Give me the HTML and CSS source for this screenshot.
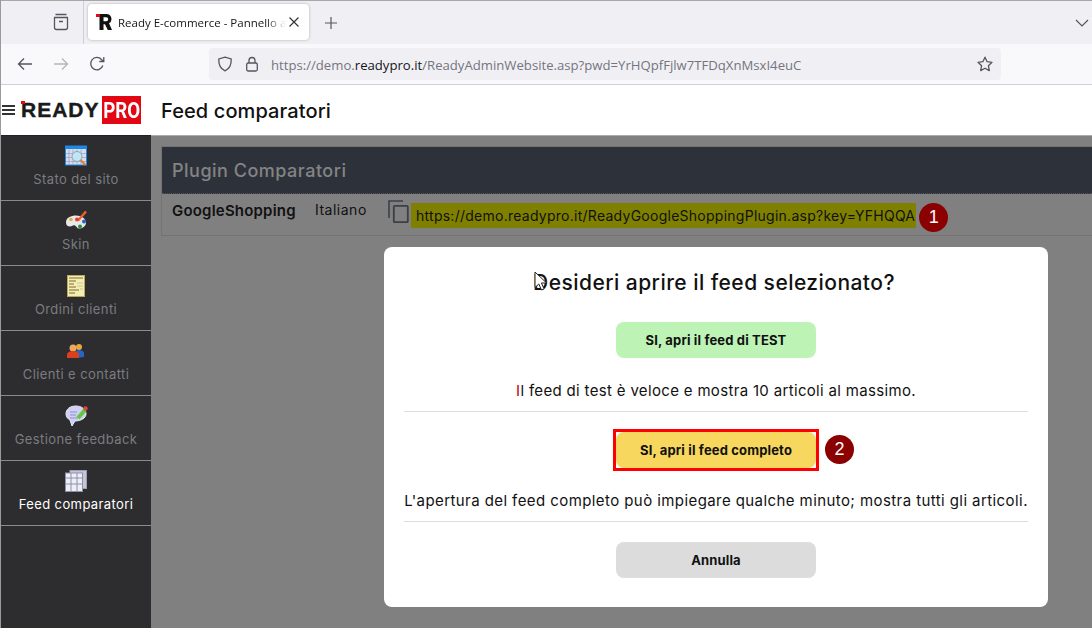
FILE: index.html
```html
<!DOCTYPE html>
<html lang="it">
<head>
<meta charset="utf-8">
<title>Feed comparatori</title>
<link rel="stylesheet" href="styles.css">
</head>
<body>
<div class="tabbar">
  <div class="tab-side">
    <svg class="ico" width="18" height="18" viewBox="0 0 18 18"><path d="M3.500 1.500h11M2 4.500h14M2.500 4.500v10a2 2 0 0 0 2 2h9a2 2 0 0 0 2-2v-10M7 8.500h4" fill="none" stroke="#55555f" stroke-width="1.300"/></svg>
  </div>
  <div class="tab">
    <svg class="favicon" width="16" height="16" viewBox="0 0 16 16"><rect x="0" y="0" width="4" height="3" fill="#e30613"/><path d="M4 0h6.500a5 5 0 0 1 2.500 9.300L16 16h-4.200L9 10.300H7.500V16H3.500V3H4z M7.500 3.200v4h2.700a2 2 0 0 0 0-4z" fill="#111" fill-rule="evenodd"/></svg>
    <span class="tab-title">Ready E-commerce - Pannello a</span>
    <svg class="tab-close" width="12" height="12" viewBox="0 0 12 12"><path d="M1.500 1.500l9 9M10.500 1.500l-9 9" stroke="#333" stroke-width="1.200"/></svg>
  </div>
  <svg class="plus" width="14" height="14" viewBox="0 0 14 14"><path d="M7 1v12M1 7h12" stroke="#55555f" stroke-width="1.200"/></svg>
  <svg class="chev" width="14" height="8" viewBox="0 0 14 8"><path d="M1 1l6 6 6-6" fill="none" stroke="#55555f" stroke-width="1.200"/></svg>
</div>

<div class="toolbar">
  <svg class="nav" width="16" height="14" viewBox="0 0 16 14"><path d="M15 7H1.500M7 1.500L1.500 7 7 12.500" fill="none" stroke="#55555f" stroke-width="1.300"/></svg>
  <svg class="nav" width="16" height="14" viewBox="0 0 16 14"><path d="M1 7h13.500M9 1.500L14.500 7 9 12.500" fill="none" stroke="#b4b4ba" stroke-width="1.300"/></svg>
  <svg class="nav" width="16" height="16" viewBox="0 0 16 16"><path d="M13.800 9.500A6.200 6.200 0 1 1 12.500 3.500L14.500 5.200M14.800 1v4.500h-4.500" fill="none" stroke="#55555f" stroke-width="1.300"/></svg>
  <div class="urlbar">
    <svg width="16" height="16" viewBox="0 0 16 16"><path d="M8 1.200L14.200 3c.3 5.500-1.500 9.700-6.200 11.800C3.300 12.700 1.500 8.500 1.800 3z" fill="none" stroke="#55555f" stroke-width="1.300"/></svg>
    <svg width="14" height="16" viewBox="0 0 14 16"><rect x="1.700" y="7" width="10.600" height="8" rx="1.500" fill="none" stroke="#55555f" stroke-width="1.300"/><path d="M4 7V4.500a3 3 0 0 1 6 0V7" fill="none" stroke="#55555f" stroke-width="1.300"/></svg>
    <span class="url">https://demo.<b>readypro.it</b>/ReadyAdminWebsite.asp?pwd=YrHQpfFjlw7TFDqXnMsxI4euC</span>
    <svg class="star" width="16" height="16" viewBox="0 0 16 16"><path d="M8 1.200l2.100 4.500 4.900.6-3.600 3.400.9 4.900L8 12.200l-4.300 2.400.9-4.900L1 6.300l4.900-.6z" fill="none" stroke="#55555f" stroke-width="1.300" stroke-linejoin="round"/></svg>
  </div>
</div>

<header class="apphead">
  <span class="burger"><i></i><i></i><i></i></span>
  <span class="logo"><span class="logo-ready">READY</span><span class="logo-pro"><span>PRO</span></span></span>
  <h1 class="apptitle">Feed comparatori</h1>
</header>

<main class="app">
  <nav class="side">
    <a class="side-item">
      <svg width="22" height="21" viewBox="0 0 22 21"><rect x=".5" y=".5" width="21" height="19" fill="#d8dcf0" stroke="#1e88e5"/><rect x=".5" y=".5" width="21" height="3" fill="#1e88e5"/><path d="M4 4v15M8 4v15M12 4v15M16 4v15M1 8h20M1 12h20M1 16h20" stroke="#8e93b8" stroke-width=".6"/><circle cx="12" cy="11" r="5" fill="#bfe6f5" stroke="#8aa" /><path d="M15.500 14.500l5 5" stroke="#e07b39" stroke-width="2"/></svg>
      <span>Stato del sito</span>
    </a>
    <a class="side-item">
      <svg width="22" height="21" viewBox="0 0 22 21"><path d="M1 12C1 7 6 5 11 5s10 3 10 7-4 6-7 6c-2 0-2-2-4-3-2-1-3 1-5 1-2 0-4-1-4-4z" fill="#e8e8e8"/><circle cx="6" cy="9" r="1.800" fill="#d9b23a"/><circle cx="15" cy="16" r="2" fill="#2e8b3a"/><circle cx="19" cy="11" r="2" fill="#2a62c9"/><path d="M13 10L21 1" stroke="#f0612a" stroke-width="2.500"/><circle cx="12" cy="9" r="2" fill="#e63b2e"/></svg>
      <span>Skin</span>
    </a>
    <a class="side-item">
      <svg width="18" height="22" viewBox="0 0 18 22"><rect x=".5" y=".5" width="17" height="21" fill="#f4eeb0" stroke="#b9a95c"/><path d="M2 3h14M2 6h7M2 9h5M2 12h7M2 15h10M2 18h6" stroke="#7d6a35" stroke-width="1.200"/><path d="M10 8h6M10 11h6M13 14h3" stroke="#c9c49c"/></svg>
      <span>Ordini clienti</span>
    </a>
    <a class="side-item">
      <svg width="18" height="16" viewBox="0 0 18 16"><circle cx="12" cy="4" r="3" fill="#e8a93c"/><path d="M8 15v-5c0-2 2-3 4-3s5 1 5 3v4z" fill="#2764c4"/><circle cx="6" cy="5" r="3.500" fill="#f0a860"/><path d="M0 15v-3c0-3 3-4 6-4s6 1 6 4v3z" fill="#d8401f"/></svg>
      <span>Clienti e contatti</span>
    </a>
    <a class="side-item">
      <svg width="23" height="22" viewBox="0 0 23 22"><path d="M11 1C5 1 1 4 1 9c0 3 2 5 4 6l2 6 3-5c6 0 11-3 11-7 0-5-5-8-10-8z" fill="#cfd0f3" stroke="#e8e8fa"/><path d="M5 7h7M5 10h6M5 13h8" stroke="#8f90c8"/><path d="M13 13L20 5" stroke="#5fc83e" stroke-width="4"/><circle cx="20.500" cy="3.500" r="2.200" fill="#e0453a"/></svg>
      <span>Gestione feedback</span>
    </a>
    <a class="side-item is-active">
      <svg width="22" height="22" viewBox="0 0 22 22"><rect x="5" y=".5" width="16.500" height="18" fill="#c4c6d8" stroke="#9ea0b5"/><rect x=".5" y="3" width="17" height="18.500" fill="#eeeef8" stroke="#8e90a8"/><path d="M6 3v18M12 3v18M1 8h16M1 14h16" stroke="#8e90a8"/></svg>
      <span>Feed comparatori</span>
    </a>
  </nav>

  <section class="content">
    <div class="panel">
      <h2 class="panel-title">Plugin Comparatori</h2>
      <div class="panel-row">
        <strong class="plugin-name">GoogleShopping</strong>
        <span class="plugin-lang">Italiano</span>
        <svg class="copy" width="21" height="23" viewBox="0 0 21 23"><path d="M1 18V1h14" fill="none" stroke="#3a3f48" stroke-width="1.600"/><rect x="5.800" y="5.800" width="14" height="16.400" rx="1" fill="none" stroke="#3a3f48" stroke-width="1.800"/></svg>
        <span class="feed-url">https://demo.readypro.it/ReadyGoogleShoppingPlugin.asp?key=YFHQQA</span>
        <span class="badge">1</span>
      </div>
    </div>
  </section>

  <div class="modal">
    <svg class="cursor" width="16" height="21" viewBox="0 0 16 21"><path d="M1 1v15.500l3.800-3.500 2.700 6 2.600-1.100-2.700-5.900h5.200z" fill="#fff" stroke="#222" stroke-width="1"/></svg>
    <h3 class="modal-title">Desideri aprire il feed selezionato?</h3>
    <button class="btn btn-test">SI, apri il feed di TEST</button>
    <p class="modal-text"><span class="red-i">I</span>l feed di test è veloce e mostra 10 articoli al massimo.</p>
    <hr class="rule">
    <div class="mark">
      <button class="btn btn-full">SI, apri il feed completo</button>
      <span class="badge badge-2">2</span>
    </div>
    <p class="modal-text modal-text-long">L'apertura del feed completo può impiegare qualche minuto; mostra tutti gli articoli.</p>
    <hr class="rule">
    <button class="btn btn-cancel">Annulla</button>
  </div>
</main>
</body>
</html>
```
FILE: styles.css
```css
* { box-sizing: border-box; }
html, body { height: 100%; }
body {
  margin: 0;
  width: 1092px;
  height: 628px;
  overflow: hidden;
  display: flex;
  flex-direction: column;
  background: #fff;
  font-family: Inter, "Noto Sans", sans-serif;
  border-left: 1px solid #9a9a9a;
}

.tabbar {
  height: 44px;
  flex: none;
  display: flex;
  align-items: flex-start;
  background: #f0f0f4;
  border-top: 1px solid #a8a8a8;
}
.tab-side {
  width: 83px;
  height: 43px;
  border-right: 1px solid #cfcfd8;
  display: flex;
  align-items: center;
  justify-content: flex-end;
  padding: 0 13px 1px 0;
}
.tab {
  width: 221px;
  height: 36px;
  margin: 3px 0 0 4px;
  padding: 0 9px 0 8px;
  display: flex;
  align-items: center;
  background: #fff;
  border-radius: 4px;
  box-shadow: 0 0 3px rgba(0,0,0,.28);
}
.favicon { flex: none; }
.tab-title {
  flex: 1;
  margin-left: 6px;
  font: 11.5px "Open Sans", sans-serif;
  color: #15141a;
  white-space: nowrap;
  -webkit-mask-image: linear-gradient(90deg, #000 88%, transparent);
  mask-image: linear-gradient(90deg, #000 88%, transparent);
}
.tab-close { flex: none; margin-left: 2px; }
.plus { margin: 15px 0 0 15px; }
.chev { margin: 18px 3px 0 auto; }

.toolbar {
  height: 41px;
  flex: none;
  display: flex;
  align-items: center;
  padding: 0 91px 0 16px;
  background: #f9f9fb;
  border-bottom: 1px solid #cfcfd8;
}
.nav { flex: none; margin-right: 20px; }
.urlbar {
  flex: 1;
  height: 32px;
  margin-left: 84px;
  display: flex;
  align-items: center;
  gap: 12px;
  padding: 0 8px;
  background: #f0f0f4;
  border-radius: 4px;
}
.url {
  font: 13.15px "Open Sans", sans-serif;
  color: #74747f;
  white-space: nowrap;
  padding-top: 1px;
}
.url b { font-weight: 400; color: #15141a; }
.star { margin-left: auto; }

.apphead {
  height: 50px;
  flex: none;
  display: flex;
  align-items: center;
  background: #fff;
}
.burger {
  width: 13px;
  margin-left: 1px;
  display: flex;
  flex-direction: column;
  gap: 2px;
}
.burger i { height: 2px; background: #333; }
.logo { display: flex; align-items: center; margin-left: 6px; }
.logo-ready {
  position: relative;
  width: 81px;
  font: 700 21px "Liberation Sans", sans-serif;
  letter-spacing: 1px;
  -webkit-text-stroke: .4px #1a1a1a;
  color: #1a1a1a;
}
.logo-ready::before {
  content: "";
  position: absolute;
  left: 0;
  top: 3px;
  width: 4px;
  height: 3px;
  background: #e30613;
}
.logo-pro {
  width: 39px;
  height: 28px;
  display: flex;
  align-items: center;
  justify-content: center;
  background: #e30613;
  color: #fff;
  font: 700 22px Roboto, sans-serif;
}
.logo-pro span { display: block; transform: scaleX(.85); }
.apptitle {
  margin: 2px 0 0 20px;
  font-size: 20px;
  font-weight: 500;
  letter-spacing: .1px;
  color: #111;
}

.app {
  position: relative;
  flex: 1;
  display: flex;
  min-height: 0;
}
.side {
  width: 150px;
  flex: none;
  background: #2d2d2f;
  border-top: 1px solid #222;
}
.side-item {
  height: 65px;
  display: flex;
  flex-direction: column;
  align-items: center;
  padding-top: 9px;
  border-bottom: 1px solid #8a8a8a;
  color: #7b7c80;
  font-size: 13px;
  letter-spacing: .4px;
}
.side-item svg { height: 22px; flex: none; }
.side-item span { margin-top: 4px; }
.is-active { color: #fff; }

.content {
  flex: 1;
  padding: 10px 0 0 10px;
  background: #808080;
  border-top: 1px solid #aaa;
}
.panel { border: 1px solid #737373; border-right: 0; }
.panel-title {
  margin: 0;
  height: 47px;
  padding: 0 10px;
  display: flex;
  align-items: center;
  background: #2d323a;
  color: #848484;
  font-size: 18px;
  font-weight: 500;
  letter-spacing: .5px;
  border-bottom: 1px dotted #555;
}
.panel-row {
  height: 41px;
  display: flex;
  align-items: flex-start;
  padding: 0 0 0 10px;
  color: #111;
  font-size: 14px;
}
.plugin-name { width: 143px; margin-top: 7px; font-size: 15px; font-weight: 600; letter-spacing: .2px; }
.plugin-lang { width: 73px; margin-top: 7px; font-weight: 400; letter-spacing: .5px; }
.copy { margin-top: 6px; flex: none; }
.feed-url {
  margin: 9px 0 0 2px;
  height: 25px;
  display: flex;
  align-items: center;
  padding: 0 1px 0 5px;
  background: #808000;
  letter-spacing: .26px;
  white-space: nowrap;
}
.badge {
  width: 29px;
  height: 29px;
  display: flex;
  align-items: center;
  justify-content: center;
  flex: none;
  border-radius: 50%;
  background: #8b0000;
  color: #fff;
  font: 18px "Liberation Sans", sans-serif;
  letter-spacing: 0;
}
.panel-row .badge { margin: 9px 0 0 3px; }

.modal {
  position: absolute;
  left: 383px;
  top: 112px;
  width: 664px;
  height: 360px;
  padding: 0 20px;
  display: flex;
  flex-direction: column;
  align-items: center;
  background: #fff;
  border-radius: 8px;
  color: #111;
}
.cursor { position: absolute; left: 150px; top: 24px; }
.modal-title {
  margin: 21px 4px 25px 0;
  height: 29px;
  font-size: 21px;
  font-weight: 500;
  line-height: 29px;
  letter-spacing: .45px;
  color: #111;
}
.btn {
  width: 200px;
  height: 36px;
  flex: none;
  border: 0;
  border-radius: 8px;
  font: 700 13px Inter, sans-serif;
  letter-spacing: .15px;
  color: #111;
  padding: 0;
}
.btn-test { background: #bef3b6; }
.btn-full { background: #f8d75e; display: block; }
.btn-cancel { background: #dcdcdc; margin-top: 20px; }
.modal-text {
  margin: 23px 0 0;
  height: 19px;
  font-size: 15px;
  line-height: 19px;
  letter-spacing: .33px;
  white-space: nowrap;
}
.modal-text-long { margin-top: 20px; letter-spacing: .42px; }
.red-i { color: #b00; }
.rule {
  width: 100%;
  height: 1px;
  flex: none;
  margin: 11px 0 0;
  border: 0;
  background: #ddd;
}
.mark {
  position: relative;
  margin-top: 17px;
  border: 3px solid #f00;
}
.badge-2 { position: absolute; left: 209px; top: 3px; }
```
